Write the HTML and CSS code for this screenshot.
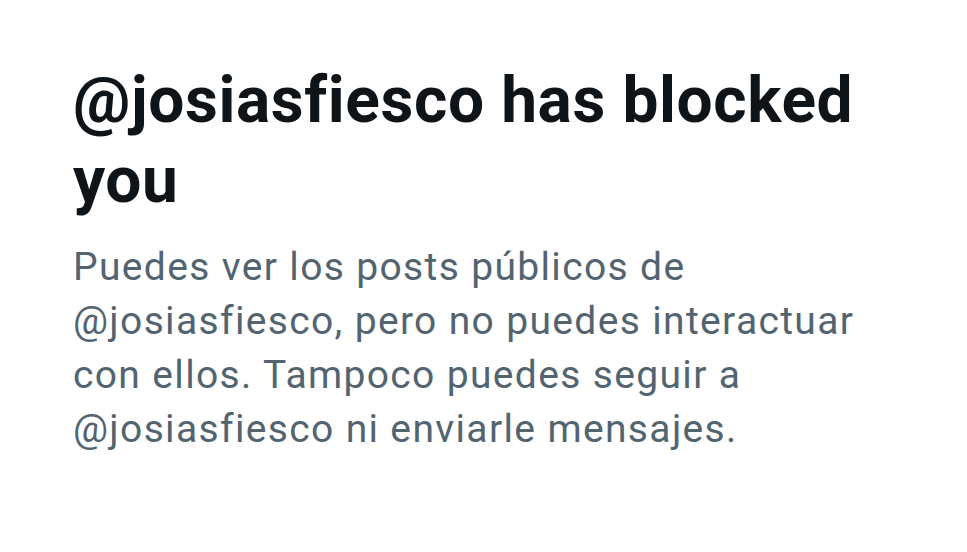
FILE: index.html
```html
<!DOCTYPE html>
<html lang="es">
<head>
<meta charset="UTF-8">
<meta name="viewport" content="width=device-width, initial-scale=1.0">
<title>Bloqueado</title>
<link rel="stylesheet" href="styles.css">
</head>
<body>
    <div class="empty-state">
        <h1 class="empty-title">@josiasfiesco has blocked you</h1>
        <p class="empty-text">Puedes ver los posts públicos de @josiasfiesco, pero no puedes interactuar con ellos. Tampoco puedes seguir a @josiasfiesco ni enviarle mensajes.</p>
    </div>
</body>
</html>
```

FILE: styles.css
```css
body {
    margin: 0;
    padding: 0;
    background: #ffffff;
    font-family: Roboto, "Noto Sans", Arial, sans-serif;
    font-variant-ligatures: none;
}
.empty-state {
    padding: 61px 73px 0 73px;
    max-width: 800px;
}
.empty-title {
    margin: 0;
    color: #0f1419;
    font-size: 64px;
    line-height: 80px;
    font-weight: 700;
    letter-spacing: 0.6px;
}
.empty-text {
    margin: 19px 0 0 0;
    color: #536471;
    font-size: 39px;
    line-height: 54px;
    letter-spacing: 1.35px;
}
```
